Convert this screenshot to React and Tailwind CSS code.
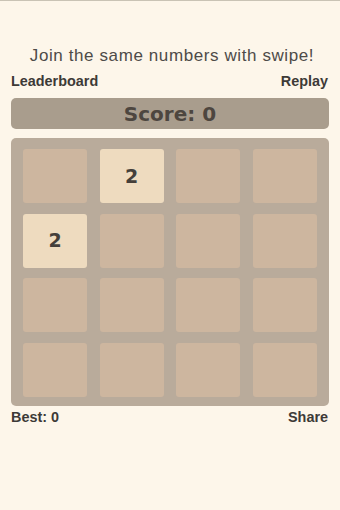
import React from "react";

const tiles = [
  0, 2, 0, 0,
  2, 0, 0, 0,
  0, 0, 0, 0,
  0, 0, 0, 0,
];

export default function App() {
  return (
    <div className="w-[340px] h-[510px] bg-[#fdf6ea] border-t border-[#c9c3b5] flex flex-col px-[11px] overflow-hidden font-['Liberation_Sans',Arial,sans-serif]">
      <div className="mt-[43px] h-[24px] leading-[24px] text-center text-[17px] tracking-[0.6px] text-[#4e4b48] whitespace-nowrap pl-[4px]">
        Join the same numbers with swipe!
      </div>
      <div className="mt-[4px] h-[18px] leading-[18px] flex justify-between text-[14.4px] font-bold text-[#3d3a37]">
        <span>Leaderboard</span>
        <span className="mr-[1px]">Replay</span>
      </div>
      <div className="mt-[8px] h-[31px] rounded-[5px] bg-[#a99d8d] flex items-center justify-center text-[20px] font-bold text-[#4d463f] font-['DejaVu_Sans',sans-serif]">
        Score: 0
      </div>
      <div className="mt-[9px] h-[268px] rounded-[5px] bg-[#b9ab9b] px-3 pt-[11px] grid grid-cols-4 grid-rows-[54px_54px_54px_54px] gap-x-[12.67px] gap-y-[10.5px] content-start">
        {tiles.map((v, i) =>
          v ? (
            <div
              key={i}
              className="rounded-[3px] bg-[#eedbbf] flex items-center justify-center text-[19px] font-bold text-[#443f3a] font-['DejaVu_Sans',sans-serif]"
            >
              {v}
            </div>
          ) : (
            <div key={i} className="rounded-[3px] bg-[#cdb69f]" />
          )
        )}
      </div>
      <div className="mt-[2px] h-[18px] leading-[18px] flex justify-between text-[14.4px] font-bold text-[#3d3a37]">
        <span>Best: 0</span>
        <span className="mr-[1px]">Share</span>
      </div>
    </div>
  );
}
